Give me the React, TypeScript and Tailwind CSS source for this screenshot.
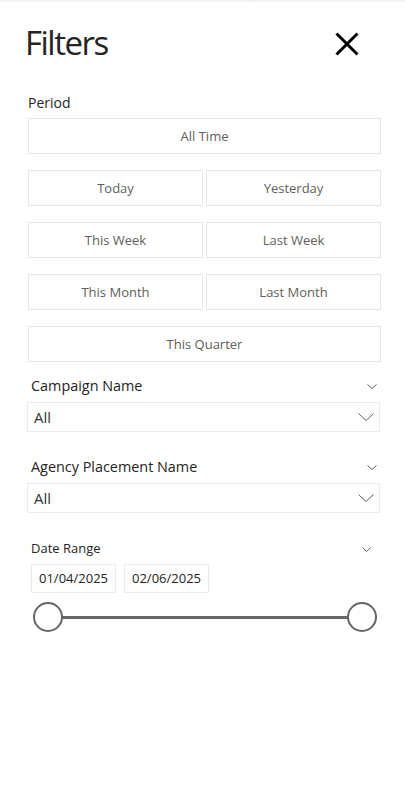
import React from "react";

const font = { fontFamily: '"Segoe UI", "Open Sans", "Noto Sans", sans-serif' };

function Chevron({ w, h, className }: { w: number; h: number; className?: string }) {
  return (
    <svg width={w} height={h} viewBox={`0 0 ${w} ${h}`} className={className} fill="none">
      <path d={`M0.5 0.5 L${w / 2} ${h - 0.5} L${w - 0.5} 0.5`} stroke="#605e5c" strokeWidth="1" />
    </svg>
  );
}

function Btn({ label }: { label: string }) {
  return (
    <button className="h-[36px] w-full border border-[#e6e6e6] bg-white text-[13px] text-[#605e5c] flex items-center justify-center pt-[2px]">
      {label}
    </button>
  );
}

function Dropdown({ label }: { label: string }) {
  return (
    <div>
      <div className="flex items-center justify-between pl-[31px] pr-[28px] h-[20px]">
        <span className="text-[14.4px] text-[#252423]">{label}</span>
        <Chevron w={10} h={5} />
      </div>
      <div className="ml-[27px] mr-[25px] mt-[6px] h-[30px] border border-[#ebebeb] flex items-center justify-between pl-[6px] pr-[5px]">
        <span className="text-[15px] text-[#333333]">All</span>
        <Chevron w={16} h={8} />
      </div>
    </div>
  );
}

export default function App() {
  return (
    <div className="w-[405px] h-[806px] bg-white relative overflow-hidden" style={font}>
      <div className="h-[2px] bg-gradient-to-b from-[#ededed] to-[#fafafa]" />
      <div className="flex items-center justify-between pl-[25px] pr-[46px] pt-[14px] h-[66px]">
        <span className="text-[33px] leading-none text-[#252423] font-normal tracking-[-1.5px]">Filters</span>
        <svg width="24" height="24" viewBox="0 0 24 24" className="mt-[4px]">
          <path d="M1.5 1.5 L22.5 22.5 M22.5 1.5 L1.5 22.5" stroke="#000" strokeWidth="3" />
        </svg>
      </div>
      <div className="pl-[28px] pr-[24px] mt-[26px]">
        <div className="text-[14px] text-[#252423] leading-[18px]">Period</div>
        <div className="mt-[6px] flex flex-col gap-[16px]">
          <Btn label="All Time" />
          <div className="grid grid-cols-2 gap-[3px]">
            <Btn label="Today" />
            <Btn label="Yesterday" />
          </div>
          <div className="grid grid-cols-2 gap-[3px]">
            <Btn label="This Week" />
            <Btn label="Last Week" />
          </div>
          <div className="grid grid-cols-2 gap-[3px]">
            <Btn label="This Month" />
            <Btn label="Last Month" />
          </div>
          <Btn label="This Quarter" />
        </div>
      </div>
      <div className="mt-[14px]">
        <Dropdown label="Campaign Name" />
      </div>
      <div className="mt-[25px]">
        <Dropdown label="Agency Placement Name" />
      </div>
      <div className="mt-[26px]">
        <div className="flex items-center justify-between pl-[31px] pr-[34px] h-[20px]">
          <span className="text-[13px] text-[#252423]">Date Range</span>
          <Chevron w={9} h={5} />
        </div>
        <div className="flex gap-[8px] pl-[31px] mt-[5px]">
          <div className="w-[85px] h-[29px] border border-[#ebebeb] flex items-center justify-center text-[13px] text-[#252423]">01/04/2025</div>
          <div className="w-[85px] h-[29px] border border-[#ebebeb] flex items-center justify-center text-[13px] text-[#252423]">02/06/2025</div>
        </div>
        <div className="relative ml-[33px] mr-[28px] mt-[9px] h-[30px] flex items-center">
          <div className="absolute left-[15px] right-[15px] h-[3px] bg-[#666666]" />
          <div className="absolute left-0 w-[30px] h-[30px] rounded-full border-[2.5px] border-[#666666] bg-white" />
          <div className="absolute right-0 w-[30px] h-[30px] rounded-full border-[2.5px] border-[#666666] bg-white" />
        </div>
      </div>
    </div>
  );
}
